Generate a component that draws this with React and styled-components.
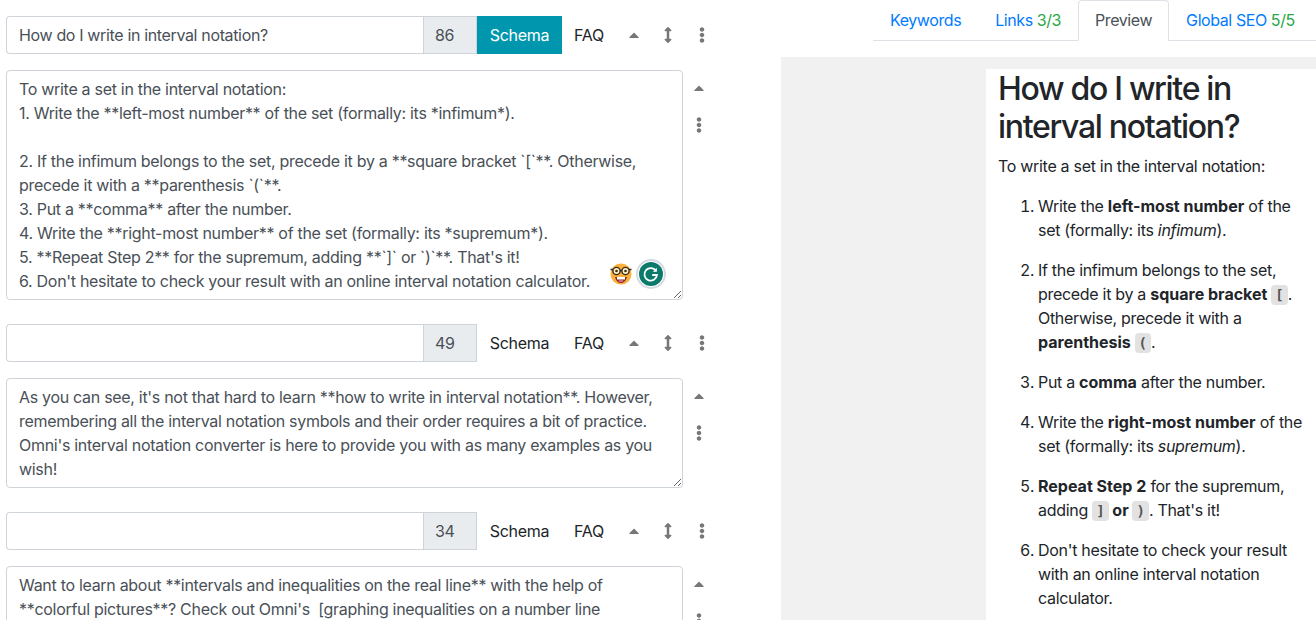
import React from "react";
import styled, { createGlobalStyle } from "styled-components";
import { FaCaretUp, FaArrowsAltV, FaEllipsisV } from "react-icons/fa";

const GlobalStyle = createGlobalStyle`
  html, body {
    margin: 0;
    height: 620px;
    overflow: hidden;
    background: #fff;
    font-family: Inter, "Liberation Sans", sans-serif;
    font-size: 16px;
    line-height: 24px;
    letter-spacing: -0.3px;
    color: #212529;
  }
`;

const Page = styled.div`
  display: flex;
  width: 1316px;
  height: 620px;
  overflow: hidden;
`;

const Editor = styled.div`
  width: 781px;
  flex: none;
  padding: 16px 0 0 6px;
  box-sizing: border-box;
`;

const Section = styled.section`
  margin-bottom: 24px;
`;

const HeaderRow = styled.div`
  display: flex;
  align-items: stretch;
  height: 38px;
  margin-bottom: 16px;
`;

const TitleInput = styled.input`
  width: 417px;
  box-sizing: border-box;
  border: 1px solid #ced4da;
  border-right: 0;
  border-radius: 4px 0 0 4px;
  padding: 0 12px;
  font: inherit;
  letter-spacing: -0.35px;
  color: #495057;
  outline: none;
`;

const Count = styled.div`
  width: 54px;
  box-sizing: border-box;
  display: flex;
  align-items: center;
  padding-left: 11px;
  background: #e9ecef;
  border: 1px solid #ced4da;
  color: #495057;
`;

const TabButton = styled.button`
  border: 0;
  padding: 0 12px;
  font: inherit;
  letter-spacing: inherit;
  background: ${({ $active }) => ($active ? "#0097ae" : "transparent")};
  color: ${({ $active }) => ($active ? "#fff" : "#212529")};
`;

const SchemaButton = styled(TabButton)`
  width: 85px;
`;

const FaqButton = styled(TabButton)`
  width: 54px;
`;

const Tool = styled.span`
  display: flex;
  align-items: center;
  justify-content: center;
  width: ${({ $w }) => $w}px;
  color: #777;
`;

const BodyRow = styled.div`
  display: flex;
`;

const TextBox = styled.div`
  position: relative;
  width: 677px;
  flex: none;
`;

const Area = styled.textarea`
  display: block;
  width: 100%;
  height: ${({ $h }) => $h}px;
  box-sizing: border-box;
  border: 1px solid #ced4da;
  border-radius: 4px;
  padding: 6px 12px;
  font: inherit;
  letter-spacing: inherit;
  color: #495057;
  overflow: hidden;
  white-space: pre;
  outline: none;
`;

const SideTools = styled.div`
  width: 32px;
  display: flex;
  flex-direction: column;
  align-items: center;
  padding-top: 10px;
  gap: 21px;
  color: #777;
`;

const Overlays = styled.div`
  position: absolute;
  right: 17px;
  bottom: 11px;
  display: flex;
  align-items: center;
  gap: 4px;
`;

const GrammarlyRing = styled.span`
  display: flex;
  align-items: center;
  justify-content: center;
  width: 30px;
  height: 30px;
  box-sizing: border-box;
  border: 2px solid #d5dae3;
  border-radius: 50%;
  background: #fff;
`;

const Side = styled.div`
  flex: 1;
  min-width: 0;
  display: flex;
  flex-direction: column;
`;

const Tabs = styled.nav`
  display: flex;
  height: 41px;
  margin-left: 92px;
  box-sizing: border-box;
  border-bottom: 1px solid #dee2e6;
  letter-spacing: -0.42px;
`;

const Tab = styled.span`
  height: 41px;
  box-sizing: border-box;
  padding: 8px 17px 0;
  white-space: nowrap;
  color: ${({ $active }) => ($active ? "#495057" : "#007bff")};
  ${({ $active }) =>
    $active &&
    `
    background: #fff;
    border: 1px solid #dee2e6;
    border-bottom-color: #fff;
    border-radius: 4px 4px 0 0;
    padding: 7px 16px 0;
  `}
`;

const Score = styled.span`
  color: #28a745;
`;

const PreviewBack = styled.div`
  flex: 1;
  margin-top: 16px;
  background: #f1f1f1;
  padding: 12px 0 0 205px;
  overflow: hidden;
`;

const Paper = styled.article`
  width: 330px;
  background: #fff;
  box-sizing: border-box;
  padding: 1px 12px 0 12px;
  height: 600px;
`;

const Heading = styled.h1`
  margin: 0 0 7px;
  font-size: 32px;
  line-height: 38.4px;
  font-weight: 500;
  letter-spacing: -1.3px;
  color: #212529;
`;

const Para = styled.p`
  margin: 0 0 16px;
  color: #212529;
`;

const Steps = styled.ol`
  margin: 0;
  padding-left: 40px;
  color: #212529;
`;

const Step = styled.li`
  margin-bottom: 16px;
`;

const Strong = styled.b`
  font-weight: 700;
  letter-spacing: 0;
`;

const Code = styled.code`
  display: inline-block;
  background: #e2e2e2;
  border-radius: 4px;
  padding: 0 4px;
  line-height: 20px;
  font-family: "DejaVu Sans Mono", "Liberation Mono", monospace;
  font-size: 14px;
  font-weight: 700;
  letter-spacing: 0;
  color: #555;
`;

const SECTIONS = [
  {
    title: "How do I write in interval notation?",
    count: 86,
    active: true,
    height: 230,
    overlay: true,
    text: `To write a set in the interval notation:
1. Write the **left-most number** of the set (formally: its *infimum*).

2. If the infimum belongs to the set, precede it by a **square bracket \`[\`**. Otherwise,
precede it with a **parenthesis \`(\`**.
3. Put a **comma** after the number.
4. Write the **right-most number** of the set (formally: its *supremum*).
5. **Repeat Step 2** for the supremum, adding **\`]\` or \`)\`**. That's it!
6. Don't hesitate to check your result with an online interval notation calculator.`,
  },
  {
    title: "",
    count: 49,
    height: 110,
    text: `As you can see, it's not that hard to learn **how to write in interval notation**. However,
remembering all the interval notation symbols and their order requires a bit of practice.
Omni's interval notation converter is here to provide you with as many examples as you
wish!`,
  },
  {
    title: "",
    count: 34,
    height: 110,
    text: `Want to learn about **intervals and inequalities on the real line** with the help of
**colorful pictures**? Check out Omni's  [graphing inequalities on a number line`,
  },
];

const NerdFace = () => (
  <svg width="22" height="22" viewBox="0 0 22 22">
    <circle cx="11" cy="11" r="10.5" fill="#fbb03b" />
    <path d="M5 14c1 4 3.500 6 6 6s5-2 6-6z" fill="#7a2e2e" />
    <rect x="7" y="14" width="8" height="2.500" fill="#fff" />
    <path d="M8 18c1.500-1.500 4.500-1.500 6 0-1.500 1.500-4.500 1.500-6 0z" fill="#ee6b7c" />
    <circle cx="6.500" cy="8" r="3.600" fill="#fff3c9" stroke="#3b2a1a" strokeWidth="1.400" />
    <circle cx="15.500" cy="8" r="3.600" fill="#fff3c9" stroke="#3b2a1a" strokeWidth="1.400" />
    <circle cx="6.500" cy="8" r="1.300" fill="#3b2a1a" />
    <circle cx="15.500" cy="8" r="1.300" fill="#3b2a1a" />
    <path d="M0.500 6.500h2.500M19 6.500h2.500M10 7.500h2" stroke="#3b2a1a" strokeWidth="1.400" />
  </svg>
);

const GrammarlyIcon = () => (
  <svg width="24" height="24" viewBox="0 0 24 24">
    <circle cx="12" cy="12" r="12" fill="#0b7a6b" />
    <path
      d="M17.200 9.200A6.300 6.300 0 1 0 18 13h-4.800"
      fill="none"
      stroke="#fff"
      strokeWidth="1.800"
    />
    <path d="M17.800 5.800v4h-4z" fill="#fff" />
  </svg>
);

const EditorSection = ({ title, count, active, height, overlay, text }) => (
  <Section>
    <HeaderRow>
      <TitleInput defaultValue={title} />
      <Count>{count}</Count>
      <SchemaButton $active={active}>Schema</SchemaButton>
      <FaqButton>FAQ</FaqButton>
      <Tool $w={36}><FaCaretUp size={16} /></Tool>
      <Tool $w={31}><FaArrowsAltV size={16} /></Tool>
      <Tool $w={38}><FaEllipsisV size={16} /></Tool>
    </HeaderRow>
    <BodyRow>
      <TextBox>
        <Area $h={height} wrap="off" defaultValue={text} />
        {overlay && (
          <Overlays>
            <NerdFace />
            <GrammarlyRing><GrammarlyIcon /></GrammarlyRing>
          </Overlays>
        )}
      </TextBox>
      <SideTools>
        <FaCaretUp size={16} />
        <FaEllipsisV size={16} />
      </SideTools>
    </BodyRow>
  </Section>
);

const App = () => (
  <Page>
    <GlobalStyle />
    <Editor>
      {SECTIONS.map((section) => (
        <EditorSection key={section.count} {...section} />
      ))}
    </Editor>
    <Side>
      <Tabs>
        <Tab>Keywords</Tab>
        <Tab>Links <Score>3/3</Score></Tab>
        <Tab $active>Preview</Tab>
        <Tab>Global SEO <Score>5/5</Score></Tab>
      </Tabs>
      <PreviewBack>
        <Paper>
          <Heading>How do I write in interval notation?</Heading>
          <Para>To write a set in the interval notation:</Para>
          <Steps>
            <Step>Write the <Strong>left-most number</Strong> of the set (formally: its <em>infimum</em>).</Step>
            <Step>If the infimum belongs to the set, precede it by a <Strong>square bracket <Code>[</Code></Strong>. Otherwise, precede it with a <Strong>parenthesis <Code>(</Code></Strong>.</Step>
            <Step>Put a <Strong>comma</Strong> after the number.</Step>
            <Step>Write the <Strong>right-most number</Strong> of the set (formally: its <em>supremum</em>).</Step>
            <Step><Strong>Repeat Step 2</Strong> for the supremum, adding <Strong><Code>]</Code> or <Code>)</Code></Strong>. That's it!</Step>
            <Step>Don't hesitate to check your result with an online interval notation calculator.</Step>
          </Steps>
        </Paper>
      </PreviewBack>
    </Side>
  </Page>
);

export default App;
